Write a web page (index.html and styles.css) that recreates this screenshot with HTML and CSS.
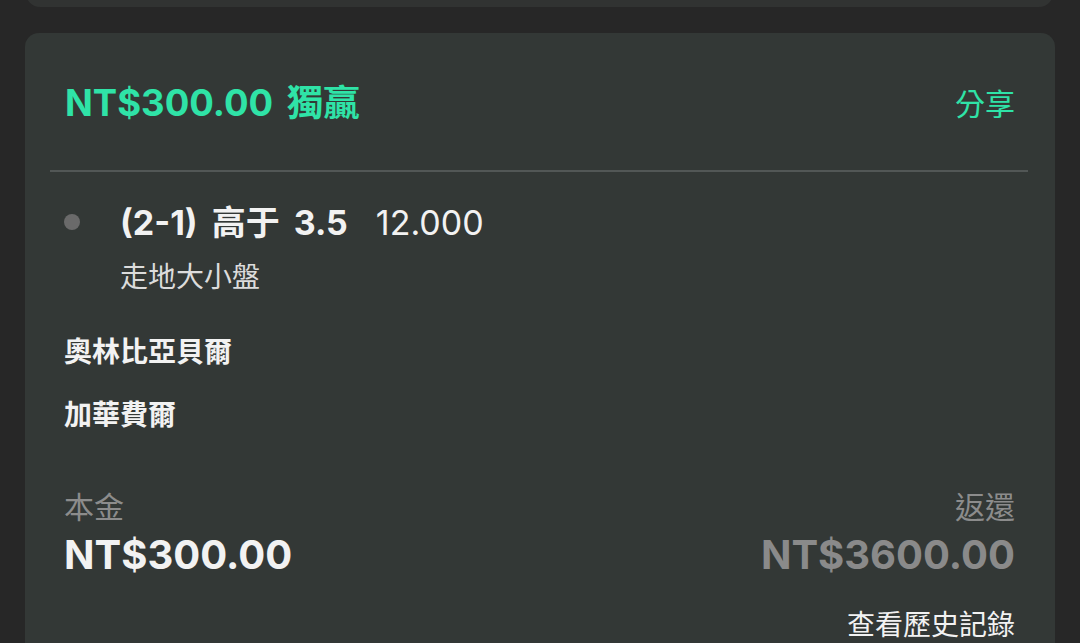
FILE: index.html
```html
<!DOCTYPE html>
<html lang="zh-Hant">
<head>
    <meta charset="utf-8" />
    <title>投注記錄</title>
    <link rel="stylesheet" href="styles.css">
</head>
<body>
    <div class="list">
        <div class="card card-prev"></div>

        <div class="card">
            <div class="card-head">
                <span class="result">NT$300.00 獨贏</span>
                <a class="share">分享</a>
            </div>
            <div class="divider"></div>

            <div class="bet">
                <span class="dot"></span>
                <div class="bet-info">
                    <div class="bet-line">
                        <span class="pick">(2-1) 高于 3.5</span>
                        <span class="odds">12.000</span>
                    </div>
                    <div class="market">走地大小盤</div>
                </div>
            </div>

            <div class="teams">
                <div class="team">奧林比亞貝爾</div>
                <div class="team">加華費爾</div>
            </div>

            <div class="totals">
                <div class="total">
                    <div class="total-label">本金</div>
                    <div class="total-value">NT$300.00</div>
                </div>
                <div class="total total-right">
                    <div class="total-label">返還</div>
                    <div class="total-value muted">NT$3600.00</div>
                </div>
            </div>
            <div class="history">查看歷史記錄</div>
        </div>
    </div>
</body>
</html>
```

FILE: styles.css
```css
html, body {
    margin: 0;
    height: 100%;
    overflow: hidden;
}
body {
    background: #272727;
    font-family: Inter, "Noto Sans CJK TC", sans-serif;
    color: #f2f2f2;
}
.list {
    display: flex;
    flex-direction: column;
    gap: 26px;
    padding: 0 25px;
    margin-top: -40px;
}
.card {
    background: #333836;
    border-radius: 14px;
    padding-bottom: 40px;
}
.card-prev {
    height: 47px;
    padding: 0;
    margin: 0 2px 0 1px;
    background: #313332;
}
.card-head {
    height: 137px;
    display: flex;
    align-items: center;
    justify-content: space-between;
    padding: 0 40px;
}
.result {
    font-size: 36.5px;
    font-weight: 700;
    word-spacing: 5px;
    color: #2fe3a7;
    margin-top: -3px;
}
.share {
    font-size: 30px;
    color: #2fe3a7;
}
.divider {
    height: 2px;
    margin: 0 27px 0 25px;
    background: #525756;
}
.bet {
    display: flex;
    align-items: flex-start;
    gap: 40px;
    padding: 31px 40px 0 39px;
}
.dot {
    width: 16px;
    height: 16px;
    border-radius: 50%;
    background: #6a6a6a;
    margin-top: 11px;
    flex: none;
}
.bet-line {
    display: flex;
    align-items: baseline;
    gap: 28px;
    line-height: 40px;
    font-size: 34px;
}
.pick {
    font-weight: 700;
    word-spacing: 6px;
}
.odds {
    font-weight: 400;
}
.market {
    margin-top: 16px;
    font-size: 28px;
    line-height: 36px;
    color: #dcdcdc;
}
.teams {
    display: flex;
    flex-direction: column;
    gap: 27px;
    padding: 39px 40px 0 39px;
}
.team {
    font-size: 28px;
    line-height: 36px;
    font-weight: 700;
}
.totals {
    display: flex;
    justify-content: space-between;
    padding: 56px 40px 0 39px;
}
.total-right {
    text-align: right;
}
.total-label {
    font-size: 30px;
    line-height: 36px;
    color: #8c8c8c;
}
.total-value {
    margin-top: 6px;
    font-size: 40px;
    line-height: 48px;
    font-weight: 700;
}
.total-value.muted {
    color: #8a8a8a;
}
.history {
    margin-top: 28px;
    padding: 0 40px;
    text-align: right;
    font-size: 28px;
    line-height: 36px;
}
```
